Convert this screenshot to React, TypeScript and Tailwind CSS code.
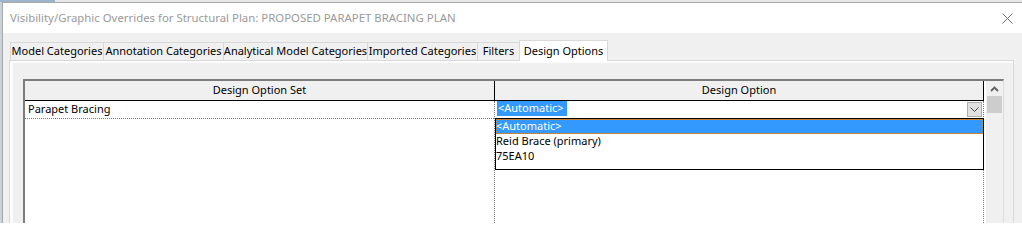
import React from "react";

const tabs = [
  { label: "Model Categories", cls: "w-[94px]" },
  { label: "Annotation Categories", cls: "w-[121px] -ml-px" },
  { label: "Analytical Model Categories", cls: "w-[145px] -ml-px" },
  { label: "Imported Categories", cls: "w-[111px] -ml-px" },
  { label: "Filters", cls: "w-[43px] -ml-px" },
];

const options = ["<Automatic>", "Reid Brace (primary)", "75EA10"];

const ChevronUp = () => (
  <svg width="9" height="6" viewBox="0 0 9 6" fill="none">
    <polyline points="1,5 4.5,1.5 8,5" stroke="#5f5f5f" strokeWidth="1.8" />
  </svg>
);

const ChevronDown = () => (
  <svg width="9" height="5" viewBox="0 0 9 5" fill="none">
    <polyline points="0.5,0.5 4.5,4.5 8.5,0.5" stroke="#444" strokeWidth="1" />
  </svg>
);

const CloseX = () => (
  <svg width="11" height="11" viewBox="0 0 11 11" fill="none">
    <line x1="0.5" y1="0.5" x2="10.5" y2="10.5" stroke="#707070" strokeWidth="1" />
    <line x1="10.5" y1="0.5" x2="0.5" y2="10.5" stroke="#707070" strokeWidth="1" />
  </svg>
);

export default function App() {
  return (
    <div className="w-[1022px] h-[223px] overflow-hidden flex flex-col bg-[#e6e6e6] font-['Noto_Sans','Open_Sans',sans-serif] text-[11px] text-black">
      {/* window behind the dialog */}
      <div className="h-[2px] flex shrink-0">
        <div className="w-[55px] bg-[#9db5cb]" />
        <div className="flex-1 bg-[#e8e8e8]" />
      </div>

      <div className="flex flex-1 min-h-0">
        <div className="w-[2px] bg-[#c9d3dc]" />

        {/* dialog */}
        <div className="flex-1 flex flex-col min-h-0 border-l border-t border-[#a8a8a8] bg-[#f0f0f0]">
          <div className="h-[30px] shrink-0 bg-white flex items-center justify-between pl-[7px] pr-[9px]">
            <span className="text-[11.4px] text-[#9a9a9a] pb-[1px] whitespace-nowrap">
              Visibility/Graphic Overrides for Structural Plan: PROPOSED PARAPET BRACING PLAN
            </span>
            <CloseX />
          </div>

          <div className="flex-1 flex flex-col min-h-0 pt-[7px]">
            {/* tabs */}
            <div className="h-[20px] flex items-end ml-[7px] shrink-0">
              {tabs.map((t) => (
                <div
                  key={t.label}
                  className={`${t.cls} h-[18px] flex items-center justify-center whitespace-nowrap border border-b-0 border-[#d9d9d9] bg-[#f0f0f0]`}
                >
                  {t.label}
                </div>
              ))}
              <div className="w-[89px] -ml-px h-[21px] -mb-px relative z-10 flex items-start justify-center whitespace-nowrap pt-[2px] border border-b-0 border-[#d9d9d9] bg-white">
                Design Options
              </div>
            </div>

            {/* tab panel */}
            <div className="ml-[6px] w-[1005px] flex-1 min-h-0 border border-b-0 border-[#d9d9d9]">
              <div className="h-full border-l-[3px] border-t-2 border-[#fcfcfc] pl-[10px] pt-[16px]">
                {/* grid */}
                <div className="w-[981px] h-full flex border-t-2 border-l-2 border-r border-t-[#7c7c7c] border-l-[#7c7c7c] border-r-[#dedede]">
                  <div className="w-[959px] flex flex-col">
                    <div className="h-[20px] flex border-b border-black bg-[#f0f0f0] shrink-0">
                      <div className="w-[470px] border-r border-black flex items-center justify-center">
                        Design Option Set
                      </div>
                      <div className="w-[489px] border-r border-black flex items-center justify-center">
                        Design Option
                      </div>
                    </div>

                    <div className="flex-1 flex bg-white relative">
                      <div className="w-[470px] border-r border-dotted border-[#7a7a7a]">
                        <div className="h-[18px] border-b border-dotted border-[#7a7a7a] pl-[3px] flex items-center">
                          Parapet Bracing
                        </div>
                      </div>
                      <div className="w-[489px] border-r border-dotted border-[#7a7a7a] relative">
                        <div className="h-[17px] flex items-start justify-between">
                          <span className="ml-[2px] h-[15px] pl-px pr-[3px] flex items-center bg-[#3399ff] text-white">
                            {"<Automatic>"}
                          </span>
                          <span className="mt-px mr-px w-[15px] h-[15px] flex items-center justify-center bg-[#e1e1e1] border border-[#adadad]">
                            <ChevronDown />
                          </span>
                        </div>

                        {/* open dropdown list */}
                        <div className="absolute left-0 top-[17px] w-[489px] h-[52px] border border-black bg-white z-20">
                          {options.map((o, i) => (
                            <div
                              key={o}
                              className={
                                i === 0
                                  ? "h-[15px] flex items-center bg-[#3399ff] text-white outline-1 outline-dotted outline-[#d08a3c] -outline-offset-1"
                                  : "h-[15px] flex items-center"
                              }
                            >
                              {o}
                            </div>
                          ))}
                        </div>
                      </div>
                    </div>
                  </div>

                  {/* vertical scrollbar */}
                  <div className="w-[19px] border-l-2 border-white bg-[#f0f0f0] flex flex-col">
                    <div className="h-[15px] flex items-center justify-center">
                      <ChevronUp />
                    </div>
                    <div className="mx-px h-[17px] bg-[#cdcdcd]" />
                  </div>
                </div>
              </div>
            </div>
          </div>
        </div>
      </div>
    </div>
  );
}
